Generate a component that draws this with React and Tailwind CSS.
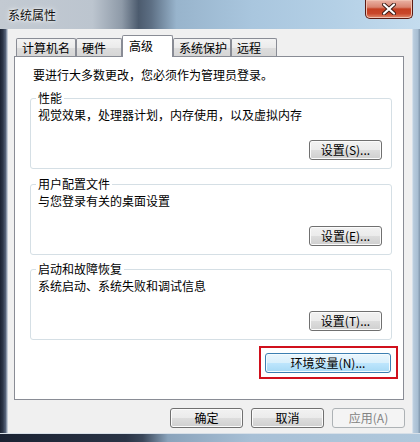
import React from "react";

const font = { fontFamily: '"Noto Sans CJK SC", "Noto Sans", sans-serif' };

function Btn({ children, className = "", variant = "normal" }) {
  const base =
    "flex items-center justify-center h-[20px] rounded-[3px] text-[12px] leading-none border";
  const v =
    variant === "hot"
      ? "border-[#3c7fb1] bg-[linear-gradient(to_bottom,#eaf6fd_0%,#d9f0fc_50%,#bee6fd_50%,#a7d9f5_100%)] text-black shadow-[inset_0_0_0_1px_#f4fbfe]"
      : variant === "disabled"
      ? "border-[#adb2b5] bg-[#f4f4f4] text-[#838383]"
      : "border-[#707070] bg-[linear-gradient(to_bottom,#f2f2f2_0%,#ebebeb_50%,#dddddd_50%,#cfcfcf_100%)] text-black shadow-[inset_0_0_0_1px_#fbfbfb]";
  return <div className={`${base} ${v} ${className}`}>{children}</div>;
}

function Group({ title, desc, btn, className = "" }) {
  return (
    <div
      className={`flex flex-col h-[71px] border border-[#d5dfe5] rounded-[3px] shadow-[inset_0_0_0_1px_#ffffff] ${className}`}
    >
      <div className="-mt-[9px] ml-[5px] self-start bg-white px-[2px] h-[16px] leading-[16px] text-[12px] text-black">
        {title}
      </div>
      <div className="mt-[1px] ml-[7px] h-[16px] leading-[16px] text-[12px] text-black">
        {desc}
      </div>
      <Btn className="self-end mt-[17px] mr-[9px] w-[73px]">{btn}</Btn>
    </div>
  );
}

function Tab({ children, w, selected }) {
  if (selected) {
    return (
      <div
        className={`${w} relative z-10 -mb-px h-[22px] bg-white border border-b-0 border-[#898c95] rounded-t-[2px] flex items-start pt-[2px] pl-[6px] text-[12px] leading-[16px] text-black`}
      >
        {children}
      </div>
    );
  }
  return (
    <div
      className={`${w} h-[18px] bg-[linear-gradient(to_bottom,#f3f3f3_0%,#ebebeb_50%,#dddddd_50%,#d6d6d6_100%)] border border-b-0 border-[#898c95] rounded-t-[2px] flex items-center pl-[5px] text-[12px] leading-[16px] text-black`}
    >
      {children}
    </div>
  );
}

export default function App() {
  return (
    <div className="w-[420px] h-[442px] flex flex-col overflow-hidden" style={font}>
      {/* Title bar */}
      <div className="h-[29px] flex items-start justify-between bg-[linear-gradient(to_right,#c3cad2_0%,#bcc5cf_22%,#8e9aa8_29%,#4c5b6e_33%,#5d6f84_36%,#98b4cc_42%,#a9c6de_60%,#b4d0e6_80%,#c4dcee_100%)]">
        <div className="ml-[8px] mt-[7px] text-[12px] leading-[16px] text-[#101010] [text-shadow:0_0_6px_#ffffff,0_0_3px_#ffffff]">
          系统属性
        </div>
        <div className="mr-[7px] w-[48px] h-[19px] rounded-b-[5px] border border-t-0 border-[#5b1a12] bg-[linear-gradient(to_bottom,#eab3a5_0%,#d98470_40%,#c43f22_50%,#c9462a_75%,#e08b6d_100%)] shadow-[inset_0_0_0_1px_#f0c0b0] flex items-center justify-center">
          <svg width="14" height="12" viewBox="0 0 14 12">
            <path
              d="M2 1.5 L12 10.5 M12 1.5 L2 10.5"
              stroke="#3a1a14"
              strokeWidth="4"
              strokeLinecap="round"
            />
            <path
              d="M2 1.5 L12 10.5 M12 1.5 L2 10.5"
              stroke="#ffffff"
              strokeWidth="2.2"
              strokeLinecap="round"
            />
          </svg>
        </div>
      </div>

      {/* Middle */}
      <div className="flex h-[404px]">
        <div className="w-[8px] bg-[linear-gradient(to_right,#1a2232_0%,#2c3648_35%,#56637a_70%,#a9b4c2_88%,#dfe5ec_100%)]" />
        <div className="w-[404px] bg-[#f0f0f0] flex flex-col pt-[6px] pl-[6px]">
          {/* Tabs */}
          <div className="flex items-end h-[21px] pl-[2px]">
            <Tab w="w-[60px]">计算机名</Tab>
            <Tab w="w-[46px]">硬件</Tab>
            <Tab w="w-[51px]" selected>
              高级
            </Tab>
            <Tab w="w-[58px]">系统保护</Tab>
            <Tab w="w-[46px]">远程</Tab>
          </div>
          {/* Panel */}
          <div className="w-[390px] h-[344px] bg-white border border-[#898c95] flex flex-col pl-[15px] pr-[11px]">
            <div className="mt-[10px] ml-[3px] h-[16px] leading-[16px] text-[12px] text-black">
              要进行大多数更改，您必须作为管理员登录。
            </div>
            <Group
              className="mt-[15px]"
              title="性能"
              desc="视觉效果，处理器计划，内存使用，以及虚拟内存"
              btn="设置(S)..."
            />
            <Group
              className="mt-[15px]"
              title="用户配置文件"
              desc="与您登录有关的桌面设置"
              btn="设置(E)..."
            />
            <Group
              className="mt-[14px]"
              title="启动和故障恢复"
              desc="系统启动、系统失败和调试信息"
              btn="设置(T)..."
            />
            <div className="flex justify-end mt-[6px] -mr-[6px]">
              <div className="border-2 border-[#d0101c] pt-[5px] pb-[4px] pl-[4px] pr-[5px]">
                <Btn variant="hot" className="w-[126px]">
                  环境变量(N)...
                </Btn>
              </div>
            </div>
          </div>
          {/* Bottom buttons */}
          <div className="flex justify-end gap-[8px] mt-[8px] pr-[7px]">
            <Btn className="w-[73px]">确定</Btn>
            <Btn className="w-[73px]">取消</Btn>
            <Btn variant="disabled" className="w-[73px]">
              应用(A)
            </Btn>
          </div>
        </div>
        <div className="w-[8px] bg-[linear-gradient(to_right,#e4ecf3_0%,#b8cbdc_20%,#a9bfd3_70%,#7f95ab_100%)]" />
      </div>

      {/* Bottom frame */}
      <div className="h-[9px] bg-[linear-gradient(to_right,#1a2232_0%,#2a3446_30%,#3a475a_34%,#8aa3bb_40%,#a8c0d6_60%,#b0c8dc_100%)] border-t border-[#d8e0e8]" />
    </div>
  );
}
